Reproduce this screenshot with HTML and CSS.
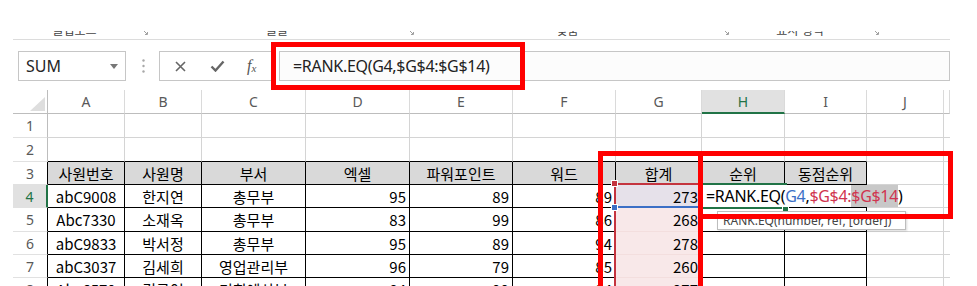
FILE: index.html
```html
<!DOCTYPE html>
<html lang="ko">
<head>
    <meta charset="UTF-8">
    <meta name="viewport" content="width=device-width, initial-scale=1.0">
    <title>RANK.EQ 순위 구하기</title>
    <link rel="stylesheet" href="styles.css">
</head>
<body>
    <!-- 리본 그룹 이름 (아래쪽만 보임) -->
    <div class="ribbon-tail">
        <div class="ribbon-groups">
            <div class="group g-clip">
                <span class="group-name">클립보드</span>
                <span class="launcher"><svg width="8" height="8" viewBox="0 0 8 8"><path d="M0.5 3V0.5H3M7.5 5V7.5H5M2 2L7 7" fill="none" stroke="#a0a0a0" stroke-width="1"/></svg></span>
            </div>
            <div class="group g-font">
                <span class="group-name">글꼴</span>
                <span class="launcher"><svg width="8" height="8" viewBox="0 0 8 8"><path d="M0.5 3V0.5H3M7.5 5V7.5H5M2 2L7 7" fill="none" stroke="#a0a0a0" stroke-width="1"/></svg></span>
            </div>
            <div class="group g-align">
                <span class="group-name">맞춤</span>
                <span class="launcher"><svg width="8" height="8" viewBox="0 0 8 8"><path d="M0.5 3V0.5H3M7.5 5V7.5H5M2 2L7 7" fill="none" stroke="#a0a0a0" stroke-width="1"/></svg></span>
            </div>
            <div class="group g-number">
                <span class="group-name">표시 형식</span>
                <span class="launcher"><svg width="8" height="8" viewBox="0 0 8 8"><path d="M0.5 3V0.5H3M7.5 5V7.5H5M2 2L7 7" fill="none" stroke="#a0a0a0" stroke-width="1"/></svg></span>
            </div>
        </div>
    </div>

    <!-- 수식 입력줄 -->
    <div class="formula-bar">
        <div class="name-box">
            <span>SUM</span>
            <svg class="name-arrow" width="8" height="5" viewBox="0 0 8 5"><path d="M0 0H8L4 5Z" fill="#777"/></svg>
        </div>
        <svg class="grip" width="3" height="14" viewBox="0 0 3 14">
            <circle cx="1.5" cy="1.5" r="1.2" fill="#a8a8a8"/>
            <circle cx="1.5" cy="7" r="1.2" fill="#a8a8a8"/>
            <circle cx="1.5" cy="12.5" r="1.2" fill="#a8a8a8"/>
        </svg>
        <div class="fx-buttons">
            <svg class="btn-cancel" width="11" height="11" viewBox="0 0 11 11"><path d="M1 1L10 10M10 1L1 10" stroke="#666" stroke-width="1.6"/></svg>
            <svg class="btn-enter" width="15" height="12" viewBox="0 0 15 12"><path d="M1.5 6.5L5.5 10.5L13.5 1.5" fill="none" stroke="#666" stroke-width="2.4"/></svg>
            <span class="btn-fx"><i>f</i><sub>x</sub></span>
        </div>
        <div class="formula-input">=RANK.EQ(G4,$G$4:$G$14)</div>
    </div>

    <!-- 시트 -->
    <div class="sheet">
        <div class="row">
            <div class="corner"><svg width="15" height="14" viewBox="0 0 15 14"><path d="M15 0V14H0Z" fill="#dedede"/></svg></div>
            <div class="col-head">A</div>
            <div class="col-head">B</div>
            <div class="col-head">C</div>
            <div class="col-head">D</div>
            <div class="col-head">E</div>
            <div class="col-head">F</div>
            <div class="col-head">G</div>
            <div class="col-head sel">H</div>
            <div class="col-head">I</div>
            <div class="col-head">J</div>
            <div class="col-head stub"></div>
        </div>

        <div class="row">
            <div class="row-head">1</div>
            <div class="cell"></div><div class="cell"></div><div class="cell"></div><div class="cell"></div><div class="cell"></div>
            <div class="cell"></div><div class="cell"></div><div class="cell"></div><div class="cell"></div><div class="cell"></div>
            <div class="cell stub"></div>
        </div>

        <div class="row">
            <div class="row-head">2</div>
            <div class="cell edge"></div><div class="cell edge"></div><div class="cell edge"></div><div class="cell edge"></div><div class="cell edge"></div>
            <div class="cell edge"></div><div class="cell edge"></div><div class="cell edge"></div><div class="cell edge"></div><div class="cell"></div>
            <div class="cell stub"></div>
        </div>

        <div class="row short">
            <div class="row-head edge">3</div>
            <div class="cell tb th">사원번호</div>
            <div class="cell tb th">사원명</div>
            <div class="cell tb th">부서</div>
            <div class="cell tb th">엑셀</div>
            <div class="cell tb th">파워포인트</div>
            <div class="cell tb th">워드</div>
            <div class="cell tb th">합계</div>
            <div class="cell tb th">순위</div>
            <div class="cell tb th">동점순위</div>
            <div class="cell"></div>
            <div class="cell stub"></div>
        </div>

        <div class="row short">
            <div class="row-head sel">4</div>
            <div class="cell tb">abC9008</div>
            <div class="cell tb">한지연</div>
            <div class="cell tb">총무부</div>
            <div class="cell tb num">95</div>
            <div class="cell tb num">89</div>
            <div class="cell tb num">89</div>
            <div class="cell tb num in-range current">273</div>
            <div class="cell tb"></div>
            <div class="cell tb"></div>
            <div class="cell"></div>
            <div class="cell stub"></div>
        </div>

        <div class="row">
            <div class="row-head edge">5</div>
            <div class="cell tb">Abc7330</div>
            <div class="cell tb">소재옥</div>
            <div class="cell tb">총무부</div>
            <div class="cell tb num">83</div>
            <div class="cell tb num">99</div>
            <div class="cell tb num">86</div>
            <div class="cell tb num in-range">268</div>
            <div class="cell tb"></div>
            <div class="cell tb"></div>
            <div class="cell"></div>
            <div class="cell stub"></div>
        </div>

        <div class="row short">
            <div class="row-head edge">6</div>
            <div class="cell tb">abC9833</div>
            <div class="cell tb">박서정</div>
            <div class="cell tb">총무부</div>
            <div class="cell tb num">95</div>
            <div class="cell tb num">89</div>
            <div class="cell tb num">94</div>
            <div class="cell tb num in-range">278</div>
            <div class="cell tb"></div>
            <div class="cell tb"></div>
            <div class="cell"></div>
            <div class="cell stub"></div>
        </div>

        <div class="row short">
            <div class="row-head edge">7</div>
            <div class="cell tb">abC3037</div>
            <div class="cell tb">김세희</div>
            <div class="cell tb">영업관리부</div>
            <div class="cell tb num">96</div>
            <div class="cell tb num">79</div>
            <div class="cell tb num">85</div>
            <div class="cell tb num in-range">260</div>
            <div class="cell tb"></div>
            <div class="cell tb"></div>
            <div class="cell"></div>
            <div class="cell stub"></div>
        </div>

        <div class="row">
            <div class="row-head edge">8</div>
            <div class="cell tb">Abc6570</div>
            <div class="cell tb">김규연</div>
            <div class="cell tb">기획예산부</div>
            <div class="cell tb num">84</div>
            <div class="cell tb num">99</div>
            <div class="cell tb num">94</div>
            <div class="cell tb num in-range">277</div>
            <div class="cell tb"></div>
            <div class="cell tb"></div>
            <div class="cell"></div>
            <div class="cell stub"></div>
        </div>

        <!-- 참조 범위 표시 -->
        <div class="range-box"></div>
        <span class="handle handle-red"></span>
        <div class="ref-line"></div>
        <span class="handle handle-blue"></span>

        <!-- 편집 중인 셀 -->
        <div class="active-cell"></div>
        <span class="fill-handle"></span>
        <div class="cell-editor">=RANK.EQ(<span class="ref-blue">G4</span>,<span class="ref-red">$G$4:</span><span class="ref-red picked">$G$14</span>)</div>
        <div class="func-tip">RANK.EQ(number, ref, [order])</div>
    </div>

    <!-- 강조 표시 빨간 상자 -->
    <div class="mark mark-formula"></div>
    <div class="mark mark-total"></div>
    <div class="mark mark-rank"></div>
</body>
</html>
```

FILE: styles.css
```css
* {
    margin: 0;
    padding: 0;
    box-sizing: border-box;
}

body {
    font-family: 'Noto Sans', 'Noto Sans CJK KR', sans-serif;
    background-color: #fff;
    color: #000;
    width: 977px;
    height: 286px;
    overflow: hidden;
    position: relative;
}

/* 리본 아래쪽: 그룹 이름은 잘려서 아래만 보임 */
.ribbon-tail {
    height: 40px;
    margin: 0 27px 0 13px;
    padding-top: 31px;
    border-bottom: 1px solid #dcdcdc;
}

.ribbon-groups {
    display: flex;
    height: 5px;
    overflow: hidden;
}

.group {
    display: flex;
    height: 14px;
    margin-top: -8px;
}

.g-clip { width: 139px; }
.g-font { width: 266px; }
.g-align { width: 315px; }
.g-number { width: 150px; }

.group-name {
    flex: 1;
    text-align: center;
    font-family: 'Noto Sans CJK KR', sans-serif;
    font-size: 12px;
    line-height: 14px;
    color: #444;
}

.launcher {
    width: 16px;
    display: flex;
    justify-content: center;
    padding-top: 4px;
}

/* 수식 입력줄 */
.formula-bar {
    display: flex;
    align-items: center;
    height: 50px;
    padding: 11px 27px 9px 18px;
}

.name-box {
    display: flex;
    align-items: center;
    width: 108px;
    height: 30px;
    border: 1px solid #c6c6c6;
    padding-left: 7px;
    font-size: 16px;
    color: #262626;
}

.name-arrow {
    margin-left: auto;
    margin-right: 7px;
}

.grip {
    margin-left: 16px;
}

.fx-buttons {
    display: flex;
    align-items: center;
    width: 113px;
    height: 30px;
    margin-left: 14px;
    border: 1px solid #c6c6c6;
    padding-left: 15px;
}

.btn-enter {
    margin-left: 24px;
}

.btn-fx {
    margin-left: 22px;
    font-family: 'Liberation Serif', serif;
    color: #555;
    font-size: 16px;
    line-height: 1;
}

.btn-fx sub {
    font-size: 11px;
    font-style: italic;
    vertical-align: -1px;
}

.formula-input {
    flex: 1;
    display: flex;
    align-items: center;
    height: 30px;
    margin-left: 7px;
    border: 1px solid #c6c6c6;
    background-color: #fcfcfc;
    padding-left: 13px;
    font-size: 16px;
    letter-spacing: -0.3px;
    color: #222;
}

/* 시트 격자 */
.sheet {
    position: relative;
    padding-left: 13px;
}

.row {
    display: grid;
    grid-template-columns: 35px 77px 77px 104px 104px 103px 103px 86px 83px 82px 77px 6px;
    height: 24px;
}

.row.short {
    height: 23px;
}

.corner {
    display: flex;
    justify-content: flex-end;
    align-items: flex-end;
    padding: 0 2px 2px 0;
    border-right: 1px solid #bdbdbd;
    border-bottom: 1px solid #bdbdbd;
}

.col-head {
    display: flex;
    justify-content: center;
    align-items: center;
    font-size: 14px;
    color: #595959;
    border-right: 1px solid #dadada;
    border-bottom: 1px solid #bdbdbd;
}

.col-head.sel {
    background-color: #e1e1e1;
    color: #217346;
    border-bottom: 2px solid #217346;
}

.row-head {
    display: flex;
    justify-content: center;
    align-items: center;
    font-size: 14px;
    color: #595959;
    border-right: 1px solid #bdbdbd;
    border-bottom: 1px solid #e1e1e1;
}

.row-head.edge {
    border-right-color: #000;
}

.row-head.sel {
    background-color: #e1e1e1;
    color: #217346;
    border-right: 2px solid #217346;
}

.cell {
    display: flex;
    justify-content: center;
    align-items: center;
    font-family: 'Noto Sans CJK KR', sans-serif;
    font-size: 15px;
    white-space: nowrap;
    overflow: hidden;
    border-right: 1px solid #d4d4d4;
    border-bottom: 1px solid #d4d4d4;
}

.cell.stub {
    border-right: none;
}

.cell.edge {
    border-bottom-color: #000;
}

.cell.tb {
    border-right-color: #000;
    border-bottom-color: #000;
}

.cell.th {
    background-color: #d9d9d9;
}

.cell.num {
    justify-content: flex-end;
    padding-right: 3px;
}

.cell.in-range {
    background-color: #f8e8e9;
    border-bottom-color: #f3dede;
}

.cell.in-range.current {
    background-color: #e6e1ea;
}

/* 참조 범위 ($G$4:$G$14) */
.range-box {
    position: absolute;
    left: 614px;
    top: 93px;
    width: 89px;
    height: 120px;
    border: 2px solid #c4343f;
}

.handle {
    position: absolute;
    width: 7px;
    height: 7px;
    border: 1px solid #fff;
}

.handle-red {
    left: 611px;
    top: 90px;
    background-color: #c4343f;
}

.ref-line {
    position: absolute;
    left: 614px;
    top: 116px;
    width: 89px;
    height: 2px;
    background-color: #3b6fc6;
}

.handle-blue {
    left: 611px;
    top: 114px;
    background-color: #3b6fc6;
}

/* 활성 셀 H4 */
.active-cell {
    position: absolute;
    left: 701px;
    top: 93px;
    width: 86px;
    height: 26px;
    border: 2px solid #217346;
}

.fill-handle {
    position: absolute;
    left: 782px;
    top: 115px;
    width: 7px;
    height: 7px;
    background-color: #217346;
    border: 1px solid #fff;
}

.cell-editor {
    position: absolute;
    left: 703px;
    top: 95px;
    width: 203px;
    height: 22px;
    background-color: #fff;
    padding-left: 3px;
    font-size: 16px;
    letter-spacing: -0.3px;
    line-height: 22px;
    white-space: nowrap;
    color: #000;
}

.ref-blue {
    color: #3b6fc6;
}

.ref-red {
    color: #d0344f;
}

.picked {
    background-color: #c8c8c8;
}

.func-tip {
    position: absolute;
    left: 717px;
    top: 121px;
    width: 189px;
    height: 19px;
    background-color: #fff;
    border: 1px solid #bdbdbd;
    box-shadow: 1px 1px 2px rgba(0, 0, 0, 0.15);
    padding-left: 5px;
    font-size: 12px;
    line-height: 17px;
    color: #444;
    white-space: nowrap;
}

/* 빨간 강조 상자 */
.mark {
    position: absolute;
    border: 5px solid #ff0000;
}

.mark-formula {
    left: 271px;
    top: 42px;
    width: 254px;
    height: 48px;
}

.mark-total {
    left: 598px;
    top: 151px;
    width: 105px;
    height: 200px;
}

.mark-rank {
    left: 698px;
    top: 151px;
    width: 255px;
    height: 68px;
}
```
